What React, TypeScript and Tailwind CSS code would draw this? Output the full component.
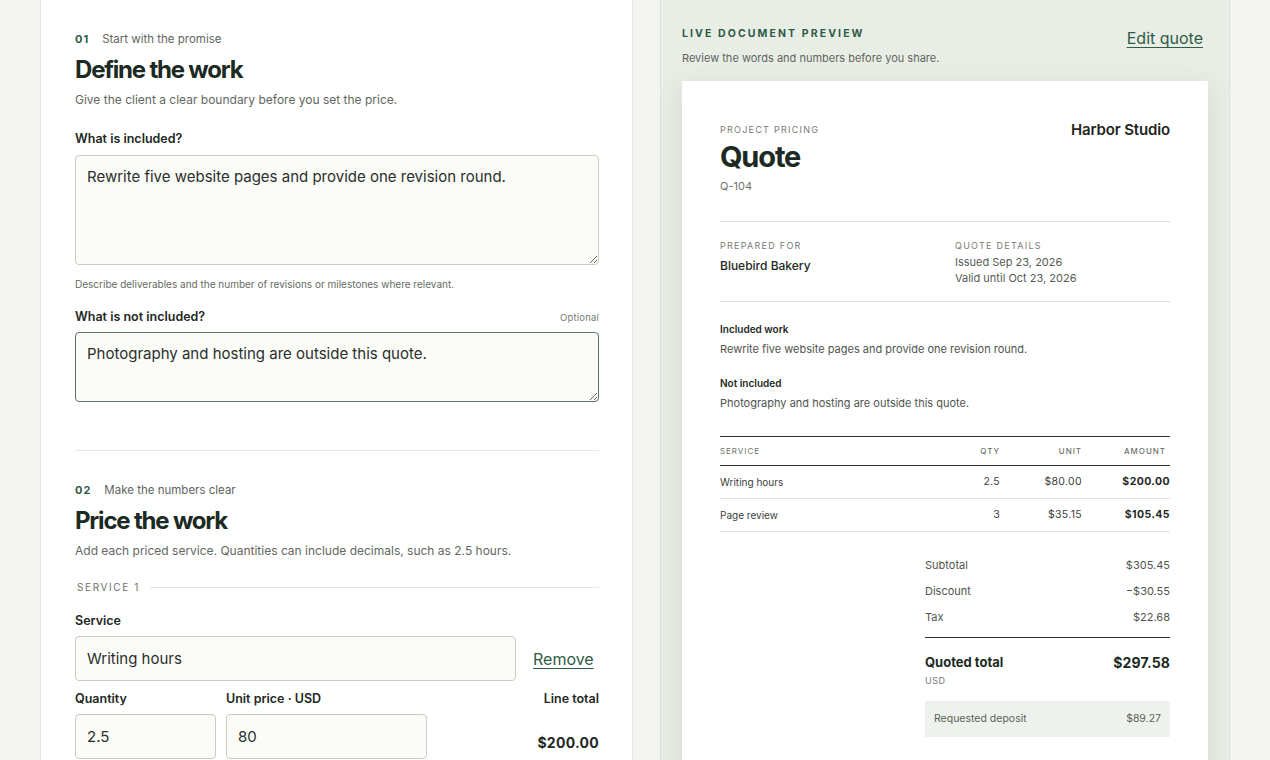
import React from 'react';

const font = { fontFamily: 'Inter, "Noto Sans", sans-serif' };

function StepHead({ num, kicker, title, lead }: { num: string; kicker: string; title: string; lead: string }) {
  return (
    <div>
      <div className="flex items-center gap-[13px] leading-[14px]">
        <span className="text-[11px] font-bold tracking-[0.09em] text-[#2f5b47]">{num}</span>
        <span className="text-[11.5px] text-[#5f645f]">{kicker}</span>
      </div>
      <h2 className="mt-[9px] text-[24px] leading-[30px] font-bold tracking-[-0.05em] text-[#1b2a22]">{title}</h2>
      <p className="mt-[7px] text-[12px] leading-[16px] text-[#62675f]">{lead}</p>
    </div>
  );
}

const fieldBox = 'rounded-[4px] border bg-[#fbfbf8] px-[11px] text-[15px] text-[#2a2f2b] outline-none';
const labelCls = 'block text-[12.5px] leading-[16px] font-semibold text-[#222823]';

export default function App() {
  const lines = [
    { name: 'Writing hours', qty: '2.5', unit: '$80.00', amount: '$200.00' },
    { name: 'Page review', qty: '3', unit: '$35.15', amount: '$105.45' },
  ];

  return (
    <div className="h-[760px] w-[1270px] overflow-hidden bg-[#f3f4ef]" style={font}>
      <div className="grid grid-cols-[593px_570px] gap-[27px] px-[40px]">
        {/* Editor column */}
        <section className="h-[760px] border-x border-[#e3e5df] bg-white pl-[34px] pr-[33px] pt-[32px]">
          <StepHead
            num="01"
            kicker="Start with the promise"
            title="Define the work"
            lead="Give the client a clear boundary before you set the price."
          />

          <label className={`${labelCls} mt-[23px]`}>What is included?</label>
          <textarea
            className={`${fieldBox} mt-[8px] block h-[110px] w-full border-[#c9ccc5] py-[11px] leading-[20px]`}
            defaultValue="Rewrite five website pages and provide one revision round."
          />
          <p className="mt-[12px] text-[10px] leading-[14px] text-[#666b64]">
            Describe deliverables and the number of revisions or milestones where relevant.
          </p>

          <div className="mt-[18px] flex items-end justify-between">
            <label className="text-[12.5px] leading-[16px] font-semibold text-[#222823]">What is not included?</label>
            <span className="text-[9.5px] leading-[14px] tracking-[0.02em] text-[#777b75]">Optional</span>
          </div>
          <textarea
            className={`${fieldBox} mt-[7px] block h-[70px] w-full border-[#5e7468] py-[11px] leading-[20px]`}
            defaultValue="Photography and hosting are outside this quote."
          />

          <div className="mt-[48px] border-t border-[#e4e6e1]" />

          <div className="mt-[32px]">
            <StepHead
              num="02"
              kicker="Make the numbers clear"
              title="Price the work"
              lead="Add each priced service. Quantities can include decimals, such as 2.5 hours."
            />
          </div>

          <div className="mt-[21px] flex items-center gap-[10px] pl-[2px]">
            <span className="text-[10px] leading-[14px] tracking-[0.16em] text-[#6d716b]">SERVICE 1</span>
            <div className="flex-1 border-t border-[#e4e6e1]" />
          </div>

          <label className={`${labelCls} mt-[19px]`}>Service</label>
          <div className="mt-[7px] flex items-center gap-[17px]">
            <input className={`${fieldBox} h-[45px] w-[441px] border-[#c9ccc5]`} defaultValue="Writing hours" />
            <a className="text-[16px] leading-[20px] text-[#2f5b47] underline underline-offset-[3px]" href="#">
              Remove
            </a>
          </div>

          <div className="mt-[10px] flex items-start gap-[10px]">
            <div className="w-[141px]">
              <label className={labelCls}>Quantity</label>
              <input className={`${fieldBox} mt-[7px] h-[45px] w-full border-[#c9ccc5]`} defaultValue="2.5" />
            </div>
            <div className="w-[201px]">
              <label className={labelCls}>Unit price · USD</label>
              <input className={`${fieldBox} mt-[7px] h-[45px] w-full border-[#c9ccc5]`} defaultValue="80" />
            </div>
            <div className="flex-1 text-right">
              <div className="text-[12.5px] leading-[16px] font-semibold text-[#222823]">Line total</div>
              <div className="mt-[27px] text-[14px] leading-[18px] font-bold tracking-[0.02em] text-[#222823]">$200.00</div>
            </div>
          </div>
        </section>

        {/* Preview column */}
        <aside className="h-[760px] border-x border-[#dde3da] bg-[#e8ede5] px-[21px] pt-[27px]">
          <div className="flex items-start justify-between pr-[5px]">
            <div>
              <div className="text-[10.5px] leading-[14px] font-bold tracking-[0.2em] text-[#2f5b47]">
                LIVE DOCUMENT PREVIEW
              </div>
              <p className="mt-[10px] text-[11px] leading-[14px] text-[#61665f]">
                Review the words and numbers before you share.
              </p>
            </div>
            <a className="mt-[1px] text-[16px] leading-[20px] text-[#2f5b47] underline underline-offset-[3px]" href="#">
              Edit quote
            </a>
          </div>

          <div className="mt-[16px] h-[700px] bg-white px-[38px] pt-[42px] shadow-[0_6px_24px_rgba(60,80,60,0.12)]">
            <div className="flex items-start justify-between">
              <div>
                <div className="text-[9px] leading-[14px] tracking-[0.14em] text-[#777b75]">PROJECT PRICING</div>
                <div className="mt-[3px] text-[29px] leading-[34px] font-bold tracking-[-0.04em] text-[#1b2a22]">Quote</div>
                <div className="mt-[5px] text-[11px] leading-[14px] text-[#71756f]">Q-104</div>
              </div>
              <div className="text-[15px] leading-[14px] font-semibold tracking-[-0.01em] text-[#1f2520]">Harbor Studio</div>
            </div>

            <div className="mt-[28px] border-t border-[#dcdfd9]" />

            <div className="mt-[18px] grid grid-cols-2 gap-[20px]">
              <div>
                <div className="text-[9px] leading-[12px] tracking-[0.14em] text-[#777b75]">PREPARED FOR</div>
                <div className="mt-[6px] text-[12px] leading-[16px] font-medium text-[#222823]">Bluebird Bakery</div>
              </div>
              <div>
                <div className="text-[9px] leading-[12px] tracking-[0.14em] text-[#777b75]">QUOTE DETAILS</div>
                <div className="mt-[2px] text-[11px] leading-[16px] text-[#555a54]">Issued Sep 23, 2026</div>
                <div className="text-[11px] leading-[16px] text-[#555a54]">Valid until Oct 23, 2026</div>
              </div>
            </div>

            <div className="mt-[15px] border-t border-[#dcdfd9]" />

            <div className="mt-[20px]">
              <div className="text-[10px] leading-[14px] font-semibold text-[#222823]">Included work</div>
              <p className="mt-[6px] text-[11px] leading-[14px] text-[#4f544e]">
                Rewrite five website pages and provide one revision round.
              </p>
              <div className="mt-[20px] text-[10px] leading-[14px] font-semibold text-[#222823]">Not included</div>
              <p className="mt-[6px] text-[11px] leading-[14px] text-[#4f544e]">
                Photography and hosting are outside this quote.
              </p>
            </div>

            <table className="mt-[26px] w-full border-collapse text-[11px]">
              <thead>
                <tr className="border-y border-[#2a2f2b] text-[8px] tracking-[0.12em] text-[#6d716b]">
                  <th className="h-[29px] text-left font-normal">SERVICE</th>
                  <th className="w-[80px] text-right font-medium">QTY</th>
                  <th className="w-[82px] text-right font-medium">UNIT</th>
                  <th className="w-[88px] pr-[4px] text-right font-medium">AMOUNT</th>
                </tr>
              </thead>
              <tbody>
                {lines.map((l) => (
                  <tr key={l.name} className="border-b border-[#e1e3de] text-[#3b403a]">
                    <td className="h-[33px] text-[10px]">{l.name}</td>
                    <td className="text-right text-[10.5px] tracking-[0.03em]">{l.qty}</td>
                    <td className="text-right text-[10.5px] tracking-[0.03em]">{l.unit}</td>
                    <td className="text-right text-[10.5px] font-bold tracking-[0.04em] text-[#222823]">{l.amount}</td>
                  </tr>
                ))}
              </tbody>
            </table>

            <div className="ml-auto mt-[20px] w-[245px] text-[11px] text-[#4f544e]">
              <div className="flex h-[26px] items-center justify-between">
                <span>Subtotal</span>
                <span>$305.45</span>
              </div>
              <div className="flex h-[26px] items-center justify-between">
                <span>Discount</span>
                <span>−$30.55</span>
              </div>
              <div className="flex h-[26px] items-center justify-between">
                <span>Tax</span>
                <span>$22.68</span>
              </div>
              <div className="mt-[7px] border-t border-[#2a2f2b]" />
              <div className="mt-[14px] flex items-center justify-between text-[#1b2a22]">
                <span className="text-[13px] font-bold">Quoted total</span>
                <span className="text-[14px] font-bold tracking-[0.01em]">$297.58</span>
              </div>
              <div className="mt-[1px] text-[9px] tracking-[0.06em] text-[#777b75]">USD</div>
              <div className="mt-[13px] flex h-[36px] items-center justify-between bg-[#eef2ec] px-[9px] text-[10.5px] text-[#5c615a]">
                <span>Requested deposit</span>
                <span>$89.27</span>
              </div>
            </div>
          </div>
        </aside>
      </div>
    </div>
  );
}
